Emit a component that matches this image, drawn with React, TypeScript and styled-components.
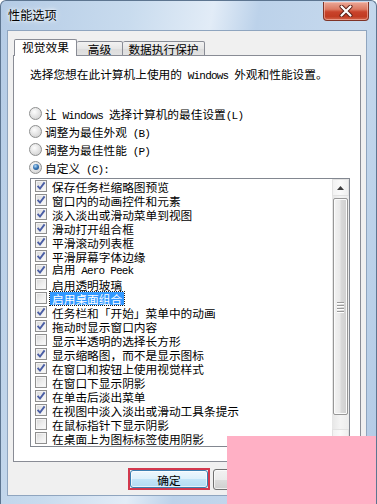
import styled, { createGlobalStyle } from "styled-components";
import { FC } from "react";

const GlobalStyle = createGlobalStyle`
  html, body {
    margin: 0;
    padding: 0;
    background: #ffffff;
  }
  * {
    box-sizing: border-box;
  }
`;

const Window = styled.div`
  position: relative;
  width: 377px;
  height: 504px;
  display: flex;
  flex-direction: column;
  border: 1px solid #5d7590;
  border-bottom: none;
  border-radius: 6px 6px 0 0;
  overflow: hidden;
  background: linear-gradient(100deg, #b4cbe5 0%, #c8dbee 28%, #e2ecf7 46%, #bcd2ea 56%, #c6d9ed 78%, #b2cae5 100%);
  font-family: "Noto Sans CJK SC", "Liberation Sans", sans-serif;
`;

const TitleBar = styled.div`
  display: flex;
  justify-content: space-between;
  align-items: flex-start;
  height: 29px;
  padding: 0 7px 0 7px;
`;

const Title = styled.div`
  margin-top: 6px;
  font-size: 12.2px;
  line-height: 16px;
  color: #000000;
  text-shadow: 0 0 6px #ffffff, 0 0 3px #ffffff;
`;

const CloseButton = styled.div`
  display: flex;
  align-items: center;
  justify-content: center;
  width: 46px;
  height: 19px;
  margin-top: 1px;
  border: 1px solid #7f3427;
  border-top: none;
  border-radius: 0 0 4px 4px;
  background: linear-gradient(#eaa898 0%, #dc7a63 40%, #c9432b 55%, #c13b22 80%, #d3664c 100%);
  box-shadow: inset 0 0 0 1px rgba(255, 210, 200, 0.5);
`;

const Body = styled.div`
  flex: 1;
  display: flex;
  padding: 0 9px 8px 6px;
`;

const Client = styled.div`
  flex: 1;
  display: flex;
  flex-direction: column;
  border: 1px solid #8fa5bf;
  background: #f0f0f0;
  padding: 8px 5px 5px 5px;
`;

const TabRow = styled.div`
  position: relative;
  z-index: 1;
  display: flex;
  align-items: flex-end;
  height: 17px;
  margin: 0 0 -1px 1px;
`;

interface ITab {
  $active?: boolean;
  $w: number;
}

const Tab = styled.div<ITab>`
  width: ${({ $w }) => $w}px;
  height: ${({ $active }) => ($active ? 17 : 15)}px;
  border: 1px solid #898c95;
  border-bottom: ${({ $active }) => ($active ? "none" : "1px solid #898c95")};
  border-left: ${({ $active }) => ($active ? "1px solid #898c95" : "none")};
  border-radius: 2px 2px 0 0;
  background: ${({ $active }) => ($active ? "#ffffff" : "linear-gradient(#f2f2f2, #e6e6e6 50%, #dcdcdc 51%, #e2e2e2)")};
  font-size: 11.7px;
  line-height: ${({ $active }) => ($active ? 14 : 13)}px;
  text-align: center;
  color: #000000;
`;

const Panel = styled.div`
  display: flex;
  flex-direction: column;
  height: 407px;
  border: 1px solid #898c95;
  background: #ffffff;
  padding: 11px 10px 14px 15px;
  font-size: 11.7px;
  color: #000000;
`;

const Description = styled.div`
  height: 14px;
  line-height: 14px;
  padding-left: 1px;
  white-space: nowrap;
`;

const Latin = styled.span`
  font-family: "Liberation Mono", monospace;
  font-size: 11px;
  letter-spacing: -0.8px;
  white-space: pre;
`;

const RadioList = styled.div`
  display: flex;
  flex-direction: column;
  margin-top: 23px;
`;

const RadioRow = styled.div`
  display: flex;
  align-items: center;
  gap: 3px;
  height: 18px;
  white-space: nowrap;
`;

interface IChecked {
  $checked?: boolean;
}

const Radio = styled.div<IChecked>`
  position: relative;
  width: 13px;
  height: 13px;
  border-radius: 50%;
  border: 1px solid #8e8f8f;
  background: radial-gradient(circle at 40% 35%, #fdfdfd 0%, #e6e6e6 45%, #c9c9c9 100%);

  &::after {
    content: "";
    display: ${({ $checked }) => ($checked ? "block" : "none")};
    position: absolute;
    left: 2.5px;
    top: 2.5px;
    width: 6px;
    height: 6px;
    border-radius: 50%;
    background: radial-gradient(circle at 40% 35%, #b8dcf6 0%, #3b79b8 45%, #123f75 100%);
  }
`;

const ListBox = styled.div`
  display: flex;
  height: 269px;
  margin: 2px 0 0 1px;
  border: 1px solid #828790;
  background: #ffffff;
  overflow: hidden;
`;

const Items = styled.div`
  flex: 1;
  display: flex;
  flex-direction: column;
  padding-left: 4px;
`;

const ItemRow = styled.div`
  display: flex;
  align-items: center;
  gap: 5px;
  height: 14px;
  line-height: 13px;
  white-space: nowrap;
`;

const CheckBoxBlock = styled.div`
  display: flex;
  align-items: center;
  justify-content: center;
  flex: none;
  width: 12px;
  height: 12px;
  border: 1px solid #8f8f8f;
  background: linear-gradient(135deg, #d6d6d6 0%, #ececec 50%, #fbfbfb 100%);
  box-shadow: inset 0 0 0 1px #f3f3f3;
`;

const CheckBox: FC<IChecked> = ({ $checked }) => (
  <CheckBoxBlock>
    {$checked && (
      <svg width="10" height="10" viewBox="0 0 10 10">
        <path d="M1.6 4.8 L4 7.6 L8.6 1.4" fill="none" stroke="#4b5fa6" strokeWidth="1.9" strokeLinejoin="miter" />
      </svg>
    )}
  </CheckBoxBlock>
);

interface IItemText {
  $selected?: boolean;
}

const ItemText = styled.span<IItemText>`
  display: inline-block;
  line-height: 13px;
  padding: 0 ${({ $selected }) => ($selected ? 2 : 0)}px;
  margin-left: ${({ $selected }) => ($selected ? -2 : 0)}px;
  background: ${({ $selected }) => ($selected ? "#3399ff" : "transparent")};
  color: ${({ $selected }) => ($selected ? "#ffffff" : "#000000")};
  outline: ${({ $selected }) => ($selected ? "1px dotted #1a1a1a" : "none")};
`;

const ScrollBar = styled.div`
  display: flex;
  flex-direction: column;
  width: 17px;
  background: linear-gradient(90deg, #e6e6e6, #f4f4f4 50%, #ececec);
`;

const ScrollButton = styled.div`
  display: flex;
  align-items: center;
  justify-content: center;
  height: 17px;
  border: 1px solid #e2e2e2;
  background: linear-gradient(90deg, #f2f2f2, #fafafa 50%, #efefef);
`;

const Thumb = styled.div`
  display: flex;
  flex-direction: column;
  align-items: center;
  justify-content: center;
  gap: 2px;
  height: 217px;
  margin: 2px 1px 0 1px;
  border: 1px solid #979797;
  border-radius: 2px;
  background: linear-gradient(90deg, #f3f3f3 0%, #e9e9e9 45%, #d9d9d9 55%, #cfcfcf 100%);
  box-shadow: inset 0 0 0 1px #fbfbfb;
`;

const Grip = styled.div`
  width: 7px;
  height: 1px;
  background: #9a9a9a;
  box-shadow: 0 1px 0 #ffffff;
`;

const Track = styled.div`
  flex: 1;
`;

const ButtonRow = styled.div`
  display: flex;
  align-items: center;
  height: 22px;
  margin-top: 6px;
  padding-left: 115px;
`;

const RedFrame = styled.div`
  display: flex;
  border: 2px solid #d2384d;
`;

interface IDialogButton {
  $default?: boolean;
}

const DialogButton = styled.div<IDialogButton>`
  display: flex;
  align-items: center;
  justify-content: center;
  width: ${({ $default }) => ($default ? 78 : 75)}px;
  height: ${({ $default }) => ($default ? 18 : 21)}px;
  margin-left: ${({ $default }) => ($default ? 0 : 3)}px;
  border: 1px solid ${({ $default }) => ($default ? "#3c7fb1" : "#707070")};
  border-radius: 3px;
  background: ${({ $default }) =>
    $default
      ? "linear-gradient(#eef7fd 0%, #dcf0fb 50%, #c3e5f8 51%, #b3dbf3 100%)"
      : "linear-gradient(#f2f2f2 0%, #ebebeb 50%, #dddddd 51%, #cfcfcf 100%)"};
  box-shadow: inset 0 0 0 1px #ffffffaa;
  font-size: 11.7px;
  color: #000000;
`;

const Cover = styled.div`
  position: absolute;
  left: 226px;
  top: 435px;
  width: 151px;
  height: 69px;
  background: #ffb0c5;
`;

const items: { text: string; latin?: string; checked: boolean; selected?: boolean }[] = [
  { text: "保存任务栏缩略图预览", checked: true },
  { text: "窗口内的动画控件和元素", checked: true },
  { text: "淡入淡出或滑动菜单到视图", checked: true },
  { text: "滑动打开组合框", checked: true },
  { text: "平滑滚动列表框", checked: true },
  { text: "平滑屏幕字体边缘", checked: true },
  { text: "启用", latin: " Aero Peek", checked: true },
  { text: "启用透明玻璃", checked: false },
  { text: "启用桌面组合", checked: false, selected: true },
  { text: "任务栏和「开始」菜单中的动画", checked: true },
  { text: "拖动时显示窗口内容", checked: true },
  { text: "显示半透明的选择长方形", checked: false },
  { text: "显示缩略图，而不是显示图标", checked: true },
  { text: "在窗口和按钮上使用视觉样式", checked: true },
  { text: "在窗口下显示阴影", checked: false },
  { text: "在单击后淡出菜单", checked: true },
  { text: "在视图中淡入淡出或滑动工具条提示", checked: true },
  { text: "在鼠标指针下显示阴影", checked: false },
  { text: "在桌面上为图标标签使用阴影", checked: false },
];

export default function App() {
  return (
    <>
      <GlobalStyle />
      <Window>
        <TitleBar>
          <Title>性能选项</Title>
          <CloseButton>
            <svg width="16" height="12" viewBox="0 0 16 12">
              <path d="M3.5 1.5 L12.5 10.5 M12.5 1.5 L3.5 10.5" stroke="#5a1f16" strokeWidth="4" strokeLinecap="round" />
              <path d="M3.5 1.5 L12.5 10.5 M12.5 1.5 L3.5 10.5" stroke="#ffffff" strokeWidth="2.2" strokeLinecap="round" />
            </svg>
          </CloseButton>
        </TitleBar>
        <Body>
          <Client>
            <TabRow>
              <Tab $active $w={63}>视觉效果</Tab>
              <Tab $w={46}>高级</Tab>
              <Tab $w={82}>数据执行保护</Tab>
            </TabRow>
            <Panel>
              <Description>
                选择您想在此计算机上使用的<Latin> Windows </Latin>外观和性能设置。
              </Description>
              <RadioList>
                <RadioRow>
                  <Radio />
                  <span>
                    让<Latin> Windows </Latin>选择计算机的最佳设置<Latin>(L)</Latin>
                  </span>
                </RadioRow>
                <RadioRow>
                  <Radio />
                  <span>
                    调整为最佳外观<Latin> (B)</Latin>
                  </span>
                </RadioRow>
                <RadioRow>
                  <Radio />
                  <span>
                    调整为最佳性能<Latin> (P)</Latin>
                  </span>
                </RadioRow>
                <RadioRow>
                  <Radio $checked />
                  <span>
                    自定义<Latin> (C):</Latin>
                  </span>
                </RadioRow>
              </RadioList>
              <ListBox>
                <Items>
                  {items.map((item) => (
                    <ItemRow key={item.text}>
                      <CheckBox $checked={item.checked} />
                      <ItemText $selected={item.selected}>
                        {item.text}
                        {item.latin && <Latin>{item.latin}</Latin>}
                      </ItemText>
                    </ItemRow>
                  ))}
                </Items>
                <ScrollBar>
                  <ScrollButton>
                    <svg width="7" height="4" viewBox="0 0 7 4">
                      <path d="M0 4 L3.5 0 L7 4 Z" fill="#3c3c3c" />
                    </svg>
                  </ScrollButton>
                  <Thumb>
                    <Grip />
                    <Grip />
                    <Grip />
                    <Grip />
                  </Thumb>
                  <Track />
                  <ScrollButton>
                    <svg width="7" height="4" viewBox="0 0 7 4">
                      <path d="M0 0 L3.5 4 L7 0 Z" fill="#3c3c3c" />
                    </svg>
                  </ScrollButton>
                </ScrollBar>
              </ListBox>
            </Panel>
            <ButtonRow>
              <RedFrame>
                <DialogButton $default>确定</DialogButton>
              </RedFrame>
              <DialogButton>取消</DialogButton>
            </ButtonRow>
          </Client>
        </Body>
        <Cover />
      </Window>
    </>
  );
}
